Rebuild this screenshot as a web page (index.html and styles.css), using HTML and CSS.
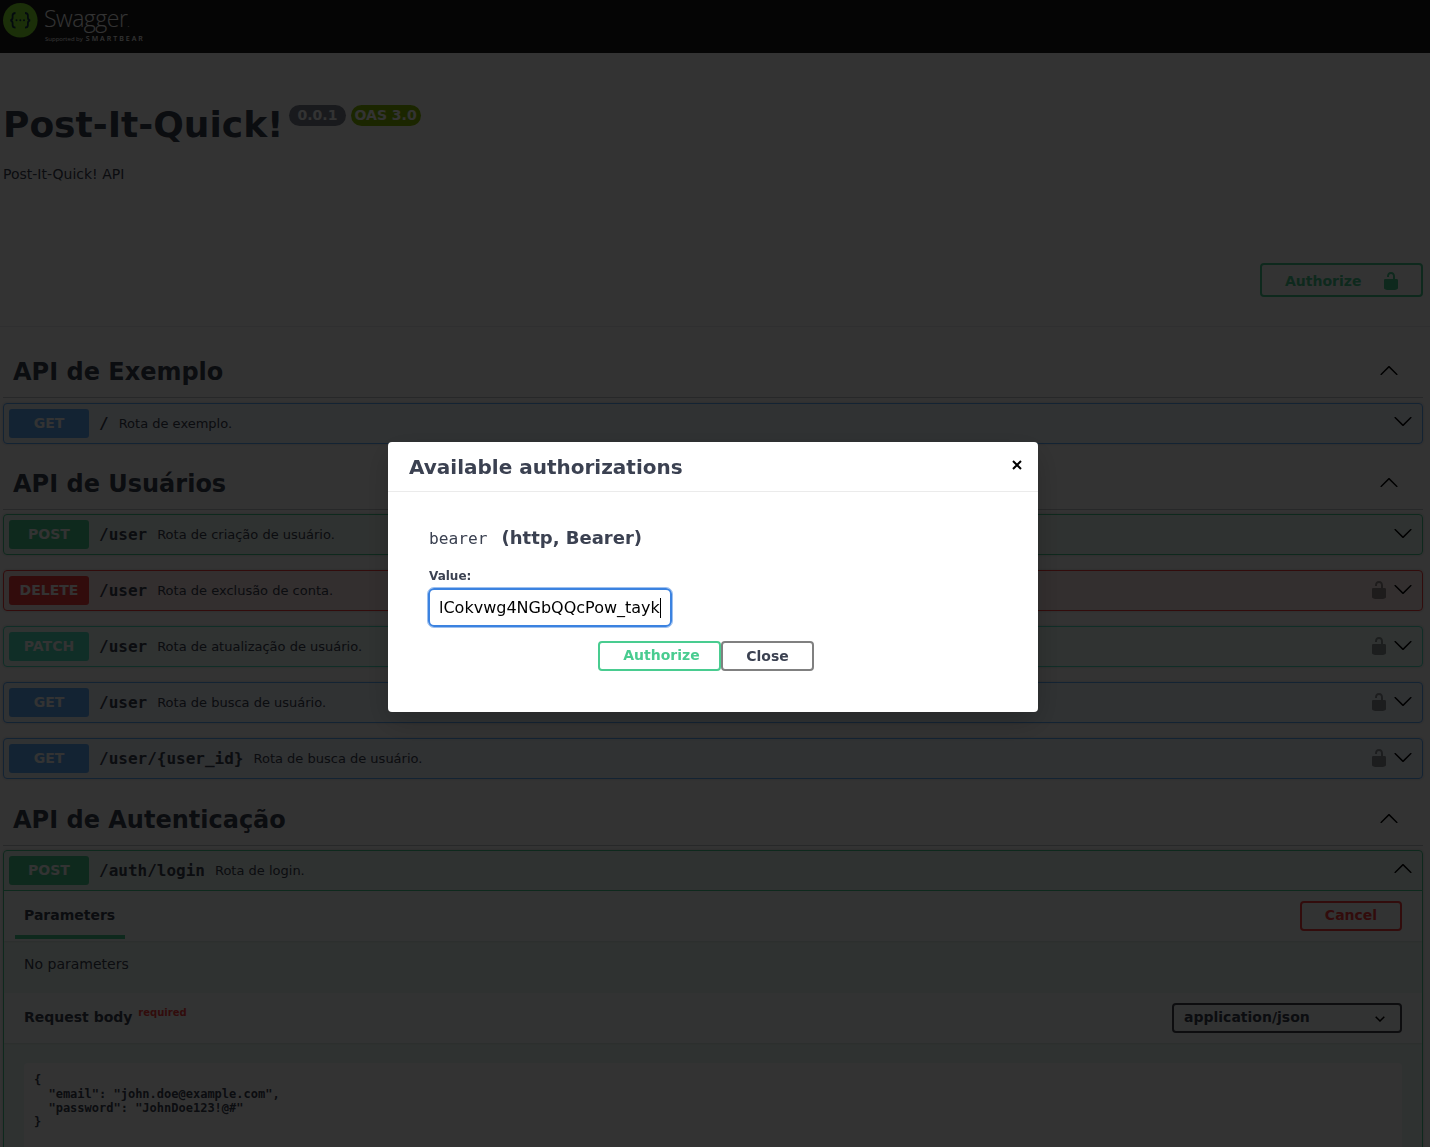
FILE: index.html
```html
<!DOCTYPE html>
<html lang="en">
<head>
  <meta charset="UTF-8">
  <title>Swagger UI</title>
  <meta name="viewport" content="width=device-width, initial-scale=1">
  <link rel="stylesheet" href="styles.css">
</head>
<body>
  <svg class="defs" width="0" height="0">
    <symbol id="down" viewBox="0 0 20 20"><path d="M17.418 6.109c.272-.268.709-.268.979 0s.271.701 0 .969l-7.908 7.83c-.27.268-.707.268-.979 0l-7.908-7.83c-.27-.268-.27-.701 0-.969.271-.268.709-.268.979 0L10 13.25l7.418-7.141z"/></symbol>
    <symbol id="up" viewBox="0 0 20 20"><path d="M17.418 14.908c.272.268.709.268.979 0s.271-.701 0-.969l-7.908-7.83c-.27-.268-.707-.268-.979 0l-7.908 7.83c-.27.268-.27.701 0 .969.271.268.709.268.979 0L10 7.767l7.418 7.141z"/></symbol>
    <symbol id="lock" viewBox="0 0 20 20"><path d="M15.8 8H14V5.6C14 2.703 12.665 1 10 1 7.334 1 6 2.703 6 5.6V6h2v-.801C8 3.754 8.797 3 10 3c1.203 0 2 .754 2 2.199V8H4c-.553 0-1 .646-1 1.199V17c0 .549.428 1.139.951 1.307l1.197.387C5.672 18.861 6.55 19 7.1 19h5.8c.549 0 1.428-.139 1.951-.307l1.196-.387c.524-.167.953-.757.953-1.306V9.199C17 8.646 16.352 8 15.8 8z"/></symbol>
  </svg>

  <div class="topbar">
    <svg class="logo-mark" width="36" height="36" viewBox="0 0 36 36">
      <circle cx="17.300" cy="17.300" r="17.300" fill="#85ea2d"/>
      <path d="M12.500 10c-2.200 0-2.900 1-2.900 2.600v1.900c0 1.400-.7 2.500-2.200 2.800 1.500.3 2.200 1.400 2.200 2.800v1.900c0 1.600.7 2.600 2.900 2.600" fill="none" stroke="#173647" stroke-width="1.800"/>
      <path d="M22 10c2.200 0 2.900 1 2.900 2.600v1.900c0 1.400.7 2.500 2.200 2.800-1.500.3-2.200 1.400-2.200 2.800v1.900c0 1.600-.7 2.600-2.900 2.600" fill="none" stroke="#173647" stroke-width="1.800"/>
      <circle cx="13.500" cy="17.300" r="1" fill="#173647"/>
      <circle cx="17.300" cy="17.300" r="1" fill="#173647"/>
      <circle cx="21" cy="17.300" r="1" fill="#173647"/>
    </svg>
    <div class="logo-text">
      <div class="logo-name">Swagger<span class="logo-dot">.</span></div>
      <div class="logo-sub"><span class="logo-by">Supported by</span> <span class="logo-bear">SMARTBEAR</span></div>
    </div>
  </div>

  <div class="wrapper">
    <div class="info">
      <h2 class="title">Post-It-Quick!<span class="badges"><span class="badge version">0.0.1</span><span class="badge oas">OAS 3.0</span></span></h2>
      <p class="description">Post-It-Quick! API</p>
    </div>
  </div>

  <div class="schemes">
    <div class="wrapper schemes-row">
      <button class="btn-authorize">
        <span>Authorize</span>
        <svg width="20" height="20"><use href="#lock"/></svg>
      </button>
    </div>
  </div>

  <div class="wrapper tags">
    <section class="tag-section">
      <div class="tag-head">
        <h3>API de Exemplo</h3>
        <svg class="tag-arrow" width="20" height="20"><use href="#up"/></svg>
      </div>
      <div class="op op-get">
        <div class="op-summary">
          <span class="method">GET</span>
          <span class="path">/</span>
          <span class="summary">Rota de exemplo.</span>
          <svg class="arrow" width="20" height="20"><use href="#down"/></svg>
        </div>
      </div>
    </section>

    <section class="tag-section">
      <div class="tag-head">
        <h3>API de Usuários</h3>
        <svg class="tag-arrow" width="20" height="20"><use href="#up"/></svg>
      </div>
      <div class="op op-post">
        <div class="op-summary">
          <span class="method">POST</span>
          <span class="path">/user</span>
          <span class="summary">Rota de criação de usuário.</span>
          <svg class="arrow" width="20" height="20"><use href="#down"/></svg>
        </div>
      </div>
      <div class="op op-delete">
        <div class="op-summary">
          <span class="method">DELETE</span>
          <span class="path">/user</span>
          <span class="summary">Rota de exclusão de conta.</span>
          <svg class="lock" width="20" height="20"><use href="#lock"/></svg>
          <svg class="arrow" width="20" height="20"><use href="#down"/></svg>
        </div>
      </div>
      <div class="op op-patch">
        <div class="op-summary">
          <span class="method">PATCH</span>
          <span class="path">/user</span>
          <span class="summary">Rota de atualização de usuário.</span>
          <svg class="lock" width="20" height="20"><use href="#lock"/></svg>
          <svg class="arrow" width="20" height="20"><use href="#down"/></svg>
        </div>
      </div>
      <div class="op op-get">
        <div class="op-summary">
          <span class="method">GET</span>
          <span class="path">/user</span>
          <span class="summary">Rota de busca de usuário.</span>
          <svg class="lock" width="20" height="20"><use href="#lock"/></svg>
          <svg class="arrow" width="20" height="20"><use href="#down"/></svg>
        </div>
      </div>
      <div class="op op-get">
        <div class="op-summary">
          <span class="method">GET</span>
          <span class="path">/user/{user_id}</span>
          <span class="summary">Rota de busca de usuário.</span>
          <svg class="lock" width="20" height="20"><use href="#lock"/></svg>
          <svg class="arrow" width="20" height="20"><use href="#down"/></svg>
        </div>
      </div>
    </section>

    <section class="tag-section">
      <div class="tag-head">
        <h3>API de Autenticação</h3>
        <svg class="tag-arrow" width="20" height="20"><use href="#up"/></svg>
      </div>
      <div class="op op-post op-open">
        <div class="op-summary">
          <span class="method">POST</span>
          <span class="path">/auth/login</span>
          <span class="summary">Rota de login.</span>
          <svg class="arrow" width="20" height="20"><use href="#up"/></svg>
        </div>
        <div class="band band-params">
          <div class="tab-label">Parameters</div>
          <button class="btn-cancel">Cancel</button>
        </div>
        <div class="no-params">No parameters</div>
        <div class="band band-body">
          <div class="body-label">Request body <sup class="required">required</sup></div>
          <div class="select"><span class="select-text">application/json</span>
            <svg width="10" height="6" viewBox="0 0 10 6"><path d="M.7.7 5 5 9.300.7" fill="none" stroke="#000" stroke-width="1.500"/></svg>
          </div>
        </div>
        <div class="body-wrap">
          <pre class="code">{
  "email": "john.doe@example.com",
  "password": "JohnDoe123!@#"
}</pre>
        </div>
      </div>
    </section>
  </div>

  <div class="backdrop"></div>
  <div class="modal">
    <div class="modal-head">
      <h3>Available authorizations</h3>
      <svg class="modal-close" width="10" height="10" viewBox="0 0 10 10"><path d="M1 1l8 8M9 1l-8 8" stroke="#000" stroke-width="2" fill="none"/></svg>
    </div>
    <div class="modal-body">
      <h4><code>bearer</code>&nbsp; (http, Bearer)</h4>
      <label class="value-label">Value:</label>
      <div class="input"><span class="input-text">lCokvwg4NGbQQcPow_tayk</span></div>
      <div class="modal-btns">
        <button class="btn-modal btn-auth">Authorize</button>
        <button class="btn-modal btn-close">Close</button>
      </div>
    </div>
  </div>
</body>
</html>
```

FILE: styles.css
```css
* { box-sizing: border-box; }
html, body {
  margin: 0;
  height: 1147px;
  overflow: hidden;
}
body {
  background: #fff;
  font-family: "DejaVu Sans", sans-serif;
  color: #3b4151;
}
.defs { position: absolute; }

.topbar {
  height: 53px;
  background: #1b1b1b;
  display: flex;
  align-items: flex-start;
  padding: 3px 0 0 3px;
}
.logo-mark { flex: none; }
.logo-text { margin-left: 5px; color: #fff; }
.logo-name {
  font-family: "Open Sans", sans-serif;
  font-weight: 300;
  font-size: 23px;
  line-height: 30px;
  letter-spacing: -0.5px;
  height: 29px;
}
.logo-dot { font-size: 10px; }
.logo-sub { display: flex; align-items: baseline; gap: 3px; line-height: 13px; margin-left: 1px; }
.logo-by { font-family: "Open Sans", sans-serif; font-size: 6px; }
.logo-bear { font-family: "Open Sans", sans-serif; font-size: 7px; letter-spacing: 2px; font-weight: 600; }

.wrapper { padding: 0 7px 0 3px; }

.info { padding-top: 51px; height: 273px; }
.title {
  margin: 0;
  font-size: 36px;
  line-height: 42px;
  font-weight: 700;
  white-space: nowrap;
}
.badges { display: inline-flex; gap: 5px; vertical-align: 17px; margin-left: 5px; }
.badge {
  font-size: 14px;
  line-height: 17px;
  padding: 2px 9px;
  border-radius: 57px;
  color: #fff;
  height: 21px;
}
.version { background: #7d8492; width: 57px; }
.oas { background: #89bf04; padding: 2px 4px; }
.description { margin: 20px 0 0; font-size: 14px; line-height: 17px; }

.schemes { height: 0; }
.schemes-row { display: flex; justify-content: flex-end; }
.btn-authorize {
  margin-top: -63px;
  width: 163px;
  height: 34px;
  background: transparent;
  border: 2px solid #49cc90;
  border-radius: 4px;
  color: #49cc90;
  font: 700 14px "DejaVu Sans", sans-serif;
  display: flex;
  align-items: center;
  padding: 2px 20px 0 23px;
  justify-content: space-between;
}
.btn-authorize svg { fill: #49cc90; }

.tags {
  border-top: 1px solid rgba(59, 65, 81, 0.1);
  padding-top: 20px;
  margin-top: 0;
}
.tag-section:nth-child(2) { padding-bottom: 1px; }
.tag-head {
  height: 51px;
  display: flex;
  align-items: center;
  padding: 0 24px 0 10px;
  border-bottom: 1px solid rgba(59, 65, 81, 0.3);
  margin-bottom: 4px;
  justify-content: space-between;
}
.tag-section:first-child .tag-head { margin-bottom: 5px; }
.tag-head h3 { margin: 0; font-size: 24px; font-weight: 700; }
.tag-arrow { fill: #000; margin-bottom: 4px; }

.op {
  border: 1px solid;
  border-radius: 4px;
  margin-bottom: 15px;
  box-shadow: 0 0 3px rgba(0, 0, 0, 0.19);
}
.op-get { background: rgba(97, 175, 254, 0.1); border-color: #61affe; }
.op-post { background: rgba(73, 204, 144, 0.1); border-color: #49cc90; }
.op-delete { background: rgba(249, 62, 62, 0.1); border-color: #f93e3e; }
.op-patch { background: rgba(80, 227, 194, 0.1); border-color: #50e3c2; }
.op-summary {
  height: 39px;
  display: flex;
  align-items: center;
  padding: 0 9px 0 5px;
}
.op-open .op-summary { height: 40px; border-bottom: 1px solid #49cc90; }
.method {
  width: 80px;
  height: 29px;
  border-radius: 3px;
  color: #fff;
  font-weight: 700;
  font-size: 14px;
  text-align: center;
  line-height: 29px;
  flex: none;
}
.op-get .method { background: #61affe; }
.op-post .method { background: #49cc90; }
.op-delete .method { background: #f93e3e; }
.op-patch .method { background: #50e3c2; }
.path {
  font-family: "DejaVu Sans Mono", monospace;
  font-weight: 700;
  font-size: 16px;
  margin-left: 10px;
}
.summary { font-size: 13px; margin-left: 10px; }
.lock { fill: #000; opacity: 0.4; margin-left: auto; margin-bottom: 2px; }
.arrow { fill: #000; margin-left: 4px; margin-bottom: 4px; }
.tag-section:first-child .arrow, .op-open .arrow { margin-bottom: 6px; }
.op-summary > .summary + .arrow { margin-left: auto; }

.band {
  display: flex;
  justify-content: space-between;
  align-items: center;
  background: rgba(255, 255, 255, 0.8);
  box-shadow: 0 1px 2px rgba(0, 0, 0, 0.1);
  padding-right: 20px;
}
.band-params { height: 50px; position: relative; padding-left: 20px; }
.tab-label { font-size: 14px; font-weight: 700; margin-top: -2px; }
.band-params::after {
  content: "";
  position: absolute;
  left: 11px;
  bottom: 2px;
  width: 110px;
  height: 4px;
  background: #49cc90;
}
.btn-cancel {
  width: 102px;
  height: 30px;
  background: transparent;
  border: 2px solid #f93e3e;
  border-radius: 4px;
  color: #f93e3e;
  font: 700 14px "DejaVu Sans", sans-serif;
  padding-bottom: 3px;
}
.no-params { height: 52px; padding: 15px 0 0 20px; font-size: 14px; line-height: 17px; }
.band-body { height: 50px; padding-left: 20px; }
.body-label { font-size: 14px; font-weight: 700; margin-top: -2px; }
.required { color: #f93e3e; font-size: 10px; vertical-align: 6px; line-height: 0; margin-left: 1px; }
.select {
  width: 230px;
  height: 30px;
  border: 2px solid #41444e;
  border-radius: 4px;
  font-size: 14px;
  font-weight: 700;
  padding: 0 15px 0 10px;
  display: flex;
  align-items: center;
  justify-content: space-between;
}
.select-text { margin-top: -2px; }
.select svg { margin-top: 2px; }
.body-wrap { padding: 20px 20px 0; }
.code {
  margin: 0;
  background: #fff;
  padding: 10px 10px;
  height: 120px;
  font: 700 12px/14px "DejaVu Sans Mono", monospace;
  border-radius: 4px;
}

.backdrop {
  position: fixed;
  top: 0;
  left: 0;
  width: 100%;
  height: 100%;
  background: rgba(0, 0, 0, 0.8);
}
.modal {
  position: fixed;
  left: 388px;
  top: 442px;
  width: 650px;
  height: 270px;
  background: #fff;
  border-radius: 4px;
  box-shadow: 0 10px 30px rgba(0, 0, 0, 0.2);
}
.modal-head {
  height: 50px;
  border-bottom: 1px solid #ebebeb;
  display: flex;
  justify-content: space-between;
  align-items: center;
  padding: 0 16px 0 21px;
}
.modal-close { margin-bottom: 4px; }
.modal-head h3 { margin: 0; font-size: 20px; font-weight: 700; }
.modal-body { padding: 35px 40px 0; }
.modal-body h4 { margin: 0; font-size: 18px; line-height: 22px; font-weight: 700; padding-left: 1px; }
.modal-body code { font: 400 16.2px "DejaVu Sans Mono", monospace; margin-right: 1.5px; }
.value-label { display: block; font-size: 12px; font-weight: 700; margin: 20px 0 0 1px; line-height: 14px; }
.input {
  margin-top: 5px;
  width: 244px;
  height: 39px;
  border: 2px solid #3b82e0;
  border-radius: 6px;
  outline: 1px solid rgba(59, 130, 224, 0.5);
  display: flex;
  align-items: center;
  padding-left: 9px;
  font-size: 16px;
  color: #000;
}
.input-text { border-right: 1px solid #000; line-height: 20px; white-space: nowrap; }
.modal-btns { display: flex; justify-content: center; margin: 14px 0 0 -40px; padding-right: 14px; width: 650px; }
.btn-modal {
  height: 30px;
  border-radius: 4px;
  background: transparent;
  font: 700 14px "DejaVu Sans", sans-serif;
}
.btn-auth { width: 123px; border: 2px solid #49cc90; color: #49cc90; padding: 0 0 3px 4px; }
.btn-close { width: 93px; border: 2px solid #808080; color: #3b4151; }
```
